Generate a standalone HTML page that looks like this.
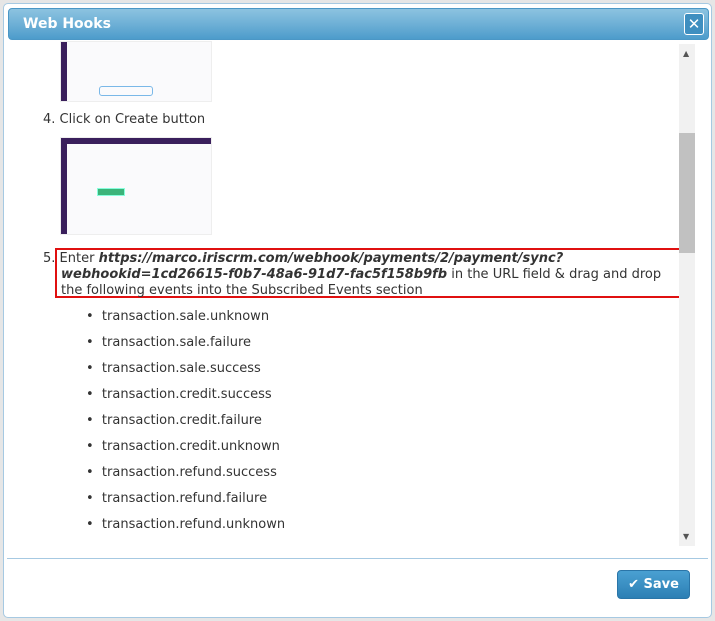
<!DOCTYPE html>
<html><head><style>
body{margin:0;width:715px;height:621px;background:#e6e6e6;font-family:"DejaVu Sans",Verdana,sans-serif;overflow:hidden;position:relative}
.dlg{position:absolute;left:3px;top:3px;width:707px;height:613px;background:#fff;border:1px solid #a6c9e2;border-radius:5px}
.title{position:absolute;left:4px;top:4px;width:699px;height:30px;border-radius:4px;background:linear-gradient(#8cc3e0,#6eb0d6 50%,#4d9ccb);border:1px solid #4b97c6}
.title span{position:absolute;left:14px;top:7px;color:#fff;font-weight:bold;font-size:14px}
.x{position:absolute;right:4px;top:4px;width:18px;height:20px;border:1px solid #fff;border-radius:3px;background:#3f8fc0;color:#fff;font-weight:bold;font-size:15px;text-align:center;line-height:20px}
.sb{position:absolute;left:675px;top:40px;width:16px;height:502px;background:#f1f1f1}
.thumb{position:absolute;left:675px;top:129px;width:16px;height:120px;background:#c1c1c1}
.t{position:absolute;font-size:13px;color:#333;white-space:nowrap}
.img{position:absolute;background:#fafafc;border:1px solid #eee}
.side{position:absolute;left:0;top:0;width:6px;height:100%;background:#3a1f5c}
.red{position:absolute;left:51px;top:244px;width:622px;height:46px;border:2px solid #e01010}
.sep{position:absolute;left:3px;top:554px;width:701px;height:1px;background:#a6c9e2}
.save{position:absolute;left:613px;top:566px;width:71px;height:27px;border-radius:4px;background:linear-gradient(#4aa0d2,#2c7fb4);border:1px solid #2a75a8;color:#fff;font-size:13px;font-weight:bold;line-height:27px;text-align:center}
</style></head><body>
<div class="dlg">
<div class="title"><span>Web Hooks</span><div class="x">✕</div></div>
<div class="img" style="left:56px;top:37px;width:150px;height:59px"><div class="side"></div>
<div style="position:absolute;left:38px;top:44px;width:52px;height:8px;border:1px solid #7ab8e8;border-radius:3px"></div></div>
<div class="t" style="left:39px;top:108px">4. Click on Create button</div>
<div class="img" style="left:56px;top:133px;width:150px;height:96px"><div class="side"></div>
<div style="position:absolute;left:0;top:0;width:150px;height:6px;background:#3a1f5c"></div>
<div style="position:absolute;left:36px;top:50px;width:26px;height:6px;background:#3cb47a;border:1px solid #8fd"></div></div>
<div class="red"></div>
<div class="t" style="left:39px;top:247px;line-height:16px">5. Enter <b><i>https://marco.iriscrm.com/webhook/payments/2/payment/sync?</i></b><br><span style="padding-left:18px"><b><i>webhookid=1cd26615-f0b7-48a6-91d7-fac5f158b9fb</i></b> in the URL field &amp; drag and drop</span><br><span style="padding-left:18px">the following events into the Subscribed Events section</span></div>
<div class="t" style="left:82px;top:300px;line-height:26px">• &nbsp;transaction.sale.unknown<br>• &nbsp;transaction.sale.failure<br>• &nbsp;transaction.sale.success<br>• &nbsp;transaction.credit.success<br>• &nbsp;transaction.credit.failure<br>• &nbsp;transaction.credit.unknown<br>• &nbsp;transaction.refund.success<br>• &nbsp;transaction.refund.failure<br>• &nbsp;transaction.refund.unknown</div>
<div class="sb"></div><div class="thumb"></div>
<div style="position:absolute;left:679px;top:45px;font-size:8px;color:#555">▲</div>
<div style="position:absolute;left:679px;top:528px;font-size:8px;color:#555">▼</div>
<div class="sep"></div>
<div class="save">✔ Save</div>
</div>
</body></html>
